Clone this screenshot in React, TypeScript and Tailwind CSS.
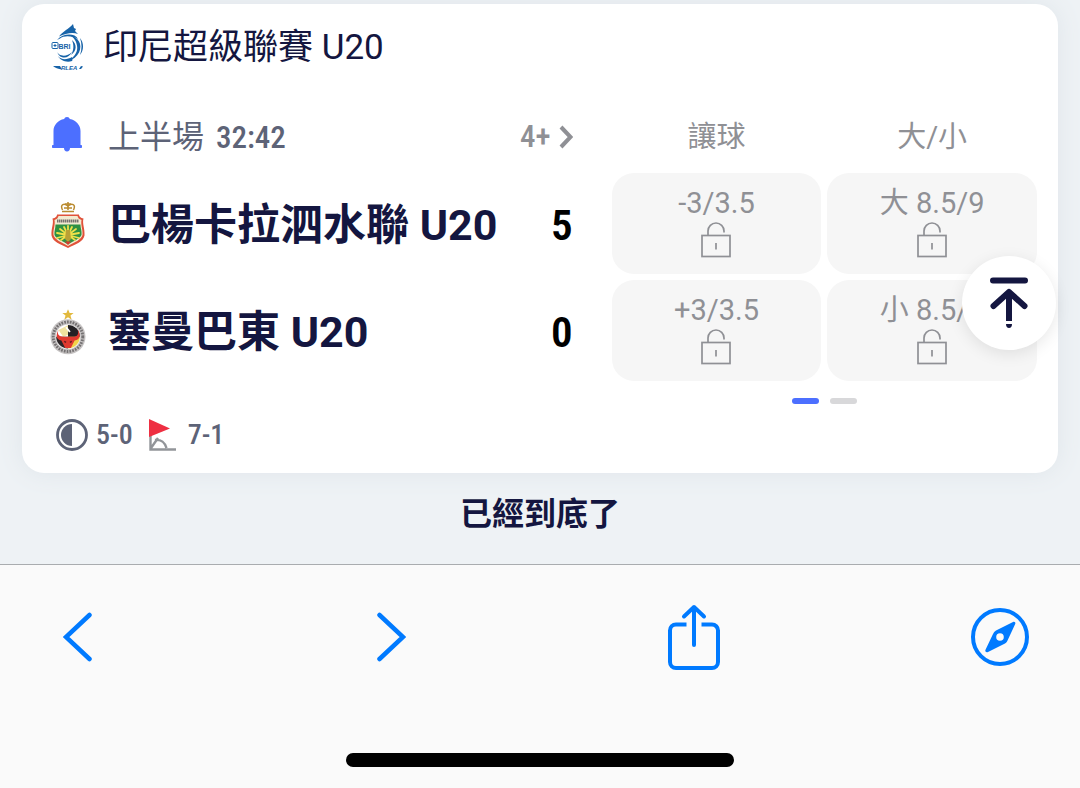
import type { ReactNode } from "react";

function LeagueLogo() {
  return (
    <svg viewBox="0 0 34 50" className="h-[50px] w-[36px] shrink-0" aria-hidden="true">
      <g fill="#1763a8">
        <path d="M8 13.500C12 8 18 6 22 1l1 4 2 1-1 2 3 3c-5-2-12-1-19 2.500z" />
        <path d="M6 17c6-7 18-7 21-1-5-3-14-4-18-.5z" />
        <path d="M19 12.500c8 1 13 9 9 17-2 4-6 7-10 8 7-5 9-10 8-15-1-5-3-8-7-10z" />
        <path d="M29 15c4 5 4 12 0 17 2-6 2-11 0-17z" />
        <path d="M6 28c1 5 9 7 15 1-3 7-13 8-15-1z" />
        <path d="M7 33c3 4 9 4 14 1 0 2 1 3 0 4-6 2-12-1-14-5z" />
        <path d="M21 17c5 4 5 11-1 15 3-5 3-10 1-15z" />
      </g>
      <rect x="1" y="19.500" width="6" height="6" rx="1" fill="#fff" stroke="#1763a8" />
      <path d="M2.500 22.500h3M4 21v3" stroke="#1763a8" />
      <text x="7.500" y="25.500" fontSize="7" fontWeight="700" fill="#1763a8" className="font-['Liberation_Sans']">BRI</text>
      <path d="M2 43h7l2 3.500C7 46 4 45 2 43z" fill="#1763a8" />
      <text x="10" y="47" fontSize="6" fontWeight="700" fontStyle="italic" fill="#1763a8" className="font-['Liberation_Sans']">RLEA</text>
      <path d="M28 46l2-3 2 .5-2 2.500z" fill="#1763a8" />
    </svg>
  );
}

function BhayangkaraCrest() {
  return (
    <svg viewBox="0 0 36 48" className="h-[48px] w-[36px] shrink-0" aria-hidden="true">
      <g fill="none" stroke="#b98a2e" strokeWidth="1.500">
        <path d="M12.500 9c-3-6 2-7 5.500-4 3.500-3 8.500-2 5.500 4" />
        <path d="M18 1v8M15 3h6M12 10.500h12M14 7h8" />
      </g>
      <path d="M7 13.500h22c0 2 1.500 3.500 4.500 4-1.500 5 1.500 10 1 17C33 41 26 43 18 47 10 43 3 41 1.500 34.500c-.5-7 2.500-12 1-17 3-.5 4.500-2 4.500-4z" fill="#e0523a" />
      <path d="M8.500 15h19c.5 2 1.500 3 4 4-1 5 1.500 9 1 15C31 39 25 41 18 45 11 41 5 39 3.500 34c-.5-6 2-10 1-15 2.500-1 3.500-2 4-4z" fill="#f3ead0" />
      <path d="M5.500 23.500h25c0 4 1.500 6 1 10.500-2 4-8 6-13.500 9.500C12.500 40 6.500 38 4.500 34c-.5-4 1-6 1-10.500z" fill="#2f9142" />
      <g stroke="#f0e04a" strokeWidth="1.800" strokeLinecap="round">
        <path d="M18 34V25M18 34l-4-8M18 34l4-8M18 34l-8-6M18 34l8-6M18 34l-11-2M18 34l11-2M18 34l-11 3M18 34l11 3M18 34l-7 5M18 34l7 5" />
      </g>
      <path d="M16 29h4l1 9-3 3-3-3z" fill="#b9a035" />
      <path d="M15 40.500h6L18 44z" fill="#d63a2e" />
      <path d="M7 20h22" stroke="#77726f" strokeWidth="3" strokeDasharray="1.500 .5" />
    </svg>
  );
}

function SemenPadangCrest() {
  return (
    <svg viewBox="0 0 38 48" className="h-[48px] w-[36px] shrink-0" aria-hidden="true">
      <path d="M19 0l1.700 4h4.300l-3.400 2.700 1.300 4.300-3.900-2.600L15.100 11l1.300-4.300L13 4h4.300z" fill="#e2b93e" />
      <circle cx="19" cy="29" r="18.500" fill="#c6c3c3" />
      <circle cx="19" cy="29" r="15.600" fill="none" stroke="#747172" strokeWidth="3" strokeDasharray="1.800 1.200" />
      <circle cx="19" cy="29" r="13" fill="#fff" />
      <path d="M19 16.500a12.500 12.500 0 0 1 12.500 12.500L19 33z" fill="#242124" />
      <path d="M9 22l10-5v10l-5 2z" fill="#f0e3a0" />
      <path d="M6.500 29H19v12.500A12.500 12.500 0 0 1 6.500 29z" fill="#2c2628" />
      <path d="M19 29h12.500A12.500 12.500 0 0 1 19 41.500z" fill="#f1d34a" />
      <path d="M9 22c-2 5 1 7 5 7h10c5 0 7-3 5-8 4 6 3 11-3 12l-2 4-2 4h-6l-2-4-2-4c-6-1-6-6-3-11z" fill="#e03a30" />
      <path d="M15 34l2 1M23 34l-2 1" stroke="#611c20" strokeWidth="1.500" />
      <path d="M17 19l4 5" stroke="#fff" strokeWidth="2" />
    </svg>
  );
}

function BellIcon() {
  return (
    <svg viewBox="0 0 30 35" className="h-[35px] w-[34px]" fill="#4c6fff" aria-hidden="true">
      <path d="M15 0c1.500 0 2.500.8 2.800 2C24 3.200 28.500 8 28.500 14v14h.7c.5 0 .8.3.8.8v1.400c0 .5-.3.8-.8.8H18c0 2-1.200 3.500-3 3.500S12 33 12 31H.8c-.5 0-.8-.3-.8-.8v-1.400c0-.5.3-.8.8-.8h.7V14C1.500 8 6 3.200 12.200 2 12.500.8 13.500 0 15 0z" />
    </svg>
  );
}

function UnlockedIcon() {
  return (
    <svg viewBox="0 0 30 37" className="h-[37px] w-[30px]" fill="none" stroke="#8f9095" strokeWidth="1.700" aria-hidden="true">
      <rect x="1" y="14.500" width="28" height="21" />
      <path d="M7 14.500V10a8 8 0 0 1 16 0v1.500M15 22v6.500" />
    </svg>
  );
}

function HalfTimeIcon() {
  return (
    <svg viewBox="0 0 32 32" className="size-8 shrink-0" aria-hidden="true">
      <circle cx="16" cy="16" r="14.500" fill="#fff" stroke="#5d6377" strokeWidth="2.800" />
      <path d="M16 5a11 11 0 0 0 0 22z" fill="#5d6377" />
    </svg>
  );
}

function CornerFlagIcon() {
  return (
    <svg viewBox="0 0 28 32" className="h-8 w-7 shrink-0" aria-hidden="true">
      <path d="M1.500 16v14.500H27M2 29l7-10M6 21c6-1 10 3 11.500 8" fill="none" stroke="#929599" strokeWidth="2.400" />
      <path d="M0 0l21 9.500L0 18z" fill="#ee2f42" />
    </svg>
  );
}

function ToTopIcon() {
  return (
    <svg viewBox="0 0 38 52" className="h-[52px] w-[38px]" fill="none" stroke="#141640" strokeWidth="6" strokeLinecap="round" strokeLinejoin="round" aria-hidden="true">
      <path d="M3 3.500h32M3.500 29L19 15l15.500 14" />
      <path d="M19 16v28" strokeLinecap="butt" />
      <path d="M16 47h6c0 2.500-1.200 4-3 4s-3-1.500-3-4z" fill="#141640" stroke="none" />
    </svg>
  );
}

function ToolbarButton({ label, children }: { label: string; children: ReactNode }) {
  return (
    <button type="button" aria-label={label} className="flex items-center text-[#007aff]">
      {children}
    </button>
  );
}

function Team({ crest, name, score }: { crest: ReactNode; name: string; score: number }) {
  return (
    <div className="flex items-center pt-[2px] pr-[33px]">
      {crest}
      <h2 className="ml-[22px] text-[43px] leading-[60px] font-bold whitespace-nowrap text-[#141640]">{name}</h2>
      <span className="ml-auto font-['Roboto_Condensed','Roboto',sans-serif] text-[43px] leading-[60px] font-semibold text-black">
        {score}
      </span>
    </div>
  );
}

function Odds({ line }: { line: string }) {
  return (
    <button type="button" className="flex h-[101px] flex-col items-center rounded-[22px] bg-[#f6f6f6] pt-3 text-[#8f9095]">
      <span className="text-[29px] leading-9">{line}</span>
      <UnlockedIcon />
    </button>
  );
}

export default function App() {
  return (
    <div className="flex min-h-screen flex-col bg-[#eef2f5] font-['Roboto','Noto_Sans_CJK_TC',sans-serif]">
      <main className="px-[22px] pt-1">
        <section className="relative rounded-[22px] bg-white pr-[21px] pb-[22px] pl-[28px] shadow-[0_0_24px_#dfe5ea]">
          <header className="flex h-[88px] items-center gap-[17px]">
            <LeagueLogo />
            <h1 className="text-[35px] leading-[48px] text-[#141640]">印尼超級聯賽 U20</h1>
          </header>

          <div className="mt-4 grid grid-cols-[53fr_20fr_20fr] gap-x-[6px] gap-y-[6px]">
            <div className="flex h-[59px] items-start pr-[33px] text-[#5d6377]">
              <button type="button" aria-label="通知" className="mt-[9px] shrink-0">
                <BellIcon />
              </button>
              <p className="ml-6 text-[32px] leading-[58px]">
                上半場{" "}
                <span className="ml-1 font-['Roboto_Condensed','Roboto',sans-serif] text-[31px] font-medium">32:42</span>
              </p>
              <a
                href="#more"
                className="ml-auto flex h-[58px] items-center gap-2 font-['Roboto_Condensed','Roboto',sans-serif] text-[31px] font-medium text-[#8f9095]"
              >
                4+
                <svg viewBox="0 0 14 24" className="h-6 w-[14px]" fill="none" stroke="currentColor" strokeWidth="4" aria-hidden="true">
                  <path d="M2 2l9.500 10L2 22" />
                </svg>
              </a>
            </div>
            <div className="text-center text-[29px] leading-[58px] text-[#8f9095]">讓球</div>
            <div className="text-center text-[29px] leading-[58px] text-[#8f9095]">大/小</div>

            <Team crest={<BhayangkaraCrest />} name="巴楊卡拉泗水聯 U20" score={5} />
            <Odds line="-3/3.5" />
            <Odds line="大 8.5/9" />

            <Team crest={<SemenPadangCrest />} name="塞曼巴東 U20" score={0} />
            <Odds line="+3/3.5" />
            <Odds line="小 8.5/9" />

            <div className="col-span-2 col-start-2 mt-[11px] flex h-[6px] justify-center gap-[11px]">
              <span className="w-[27px] rounded-full bg-[#4c6fff]" />
              <span className="w-[27px] rounded-full bg-[#d8d8da]" />
            </div>
          </div>

          <div className="mt-[15px] flex items-center pl-[6px] font-['Roboto_Condensed','Roboto',sans-serif] text-[28px] leading-8 font-medium text-[#5d6377]">
            <HalfTimeIcon />
            <span className="ml-2">5-0</span>
            <span className="ml-4 flex">
              <CornerFlagIcon />
            </span>
            <span className="ml-[11px]">7-1</span>
          </div>

          <button
            type="button"
            aria-label="回到頂部"
            className="absolute top-[252px] right-[2px] flex size-[94px] items-center justify-center rounded-full bg-white shadow-[0_4px_16px_#00000018]"
          >
            <ToTopIcon />
          </button>
        </section>
        <p className="pt-[17px] pb-[26px] text-center text-[32px] leading-[48px] font-bold text-[#141640]">已經到底了</p>
      </main>

      <footer className="flex flex-1 flex-col items-center border-t border-[#a9acaf] bg-[#fafafa]">
        <nav className="grid w-full grid-cols-[313fr_292fr_302fr_auto] items-center py-[39px] pr-[50px] pl-[63px]">
          <ToolbarButton label="上一頁">
            <svg viewBox="0 0 30 50" className="h-[50px] w-[30px]" fill="none" stroke="currentColor" strokeWidth="4.500" strokeLinecap="round" strokeLinejoin="miter">
              <path d="M26.500 3L3 25l23.500 22" />
            </svg>
          </ToolbarButton>
          <ToolbarButton label="下一頁">
            <svg viewBox="0 0 30 50" className="h-[50px] w-[30px]" fill="none" stroke="currentColor" strokeWidth="4.500" strokeLinecap="round" strokeLinejoin="miter">
              <path d="M3.500 3L27 25 3.500 47" />
            </svg>
          </ToolbarButton>
          <ToolbarButton label="分享">
            <svg viewBox="0 0 52 66" className="h-[66px] w-[52px]" fill="none" stroke="currentColor" strokeWidth="4" strokeLinecap="round" strokeLinejoin="round">
              <path d="M18.500 20.500H8a6 6 0 0 0-6 6V58a6 6 0 0 0 6 6h36a6 6 0 0 0 6-6V26.500a6 6 0 0 0-6-6H33.500" strokeLinecap="butt" />
              <path d="M26 41V3M16 12.500L26 3l10 9.500" />
            </svg>
          </ToolbarButton>
          <ToolbarButton label="瀏覽器">
            <svg viewBox="0 0 60 60" className="size-[60px]" fill="none" aria-hidden="true">
              <circle cx="30" cy="30" r="27" stroke="currentColor" strokeWidth="4" />
              <path fillRule="evenodd" fill="currentColor" d="M43 15c1.500-.8 3 .4 2.200 2L38 32.500c-.5 1.500-1.500 3-3 4L18 45c-1.600.9-3.400-.5-2.500-2.200L23 27c.6-1.400 1.600-2.600 3-3.500zM30 26.200a3.800 3.800 0 1 0 0 7.600 3.800 3.800 0 0 0 0-7.600z" />
            </svg>
          </ToolbarButton>
        </nav>
        <div className="mt-[44px] mb-[21px] h-[14px] w-[36%] rounded-full bg-black" />
      </footer>
    </div>
  );
}
